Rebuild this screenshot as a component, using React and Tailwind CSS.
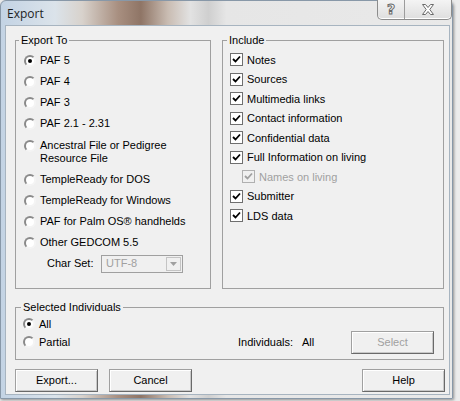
import React from "react";

const font = "font-['Liberation_Sans',Arial,sans-serif]";

function Radio({ checked }) {
    return (
        <span className="w-[12px] h-[12px] shrink-0 rounded-full border-2 border-t-[#8a8a8a] border-l-[#8a8a8a] border-r-[#f4f4f4] border-b-[#f4f4f4] bg-white flex items-center justify-center">
            {checked && <span className="w-[4px] h-[4px] rounded-full bg-black" />}
        </span>
    );
}

function Check({ disabled }) {
    return (
        <span className={"w-[13px] h-[13px] shrink-0 border border-[#6f6f6f] flex items-center justify-center " + (disabled ? "bg-[#f0f0f0] border-[#b0b0b0]" : "bg-white")}>
            <svg width="9" height="9" viewBox="0 0 9 9">
                <path d="M1 4 L3.5 6.5 L8 1.5" fill="none" stroke={disabled ? "#a0a0a0" : "#000"} strokeWidth="1.8" />
            </svg>
        </span>
    );
}

function RadioRow({ label, checked, tall }) {
    if (tall) {
        return (
            <div className="h-[35px] flex items-start gap-[4px] pt-[6px]">
                <Radio checked={checked} />
                <span className="leading-[13px] -mt-[1px]">{label}</span>
            </div>
        );
    }
    return (
        <div className="h-[21px] flex items-center gap-[4px]">
            <Radio checked={checked} />
            <span>{label}</span>
        </div>
    );
}

function CheckRow({ label, disabled, indent }) {
    return (
        <div className={"h-[19.5px] flex items-center gap-[4px] " + (indent ? "pl-[12px]" : "")}>
            <Check disabled={disabled} />
            <span className={disabled ? "text-[#a0a0a0]" : ""}>{label}</span>
        </div>
    );
}

function Button({ children, disabled, className }) {
    return (
        <div className={"h-[23px] w-[83px] flex items-center justify-center bg-[#f0f0f0] border border-[#a0a0a0] border-r-[#696969] border-b-[#696969] shadow-[inset_1px_1px_0_#ffffff,inset_-1px_-1px_0_#c8c8c8] " + (disabled ? "text-[#a0a0a0] " : "text-black ") + (className || "")}>
            {children}
        </div>
    );
}

const exportOptions = [
    { label: "PAF 5", checked: true },
    { label: "PAF 4" },
    { label: "PAF 3" },
    { label: "PAF 2.1 - 2.31" },
    { label: <>Ancestral File or Pedigree<br />Resource File</>, tall: true },
    { label: "TempleReady for DOS" },
    { label: "TempleReady for Windows" },
    { label: "PAF for Palm OS\u00ae handhelds" },
    { label: "Other GEDCOM 5.5" },
];

const includeOptions = [
    { label: "Notes" },
    { label: "Sources" },
    { label: "Multimedia links" },
    { label: "Contact information" },
    { label: "Confidential data" },
    { label: "Full Information on living" },
    { label: "Names on living", disabled: true, indent: true },
    { label: "Submitter" },
    { label: "LDS data" },
];

export default function App() {
    return (
        <div className={"w-[460px] h-[401px] overflow-hidden bg-[#ececec] flex items-start text-[11px] text-black " + font}>
            <div className="w-[453px] h-[399px] flex flex-col bg-[linear-gradient(90deg,#c3d3e4_0%,#dbe3ea_12%,#d8d2cc_18%,#a88f80_26%,#8f7566_31%,#c9bcb2_37%,#e2e2e2_42%,#cfcfcf_46%,#e6e6e6_50%,#e9e9e9_100%)] border border-[#8898a8] rounded-t-[6px] shadow-[1px_1px_3px_rgba(0,0,0,0.4)]">
                <div className="h-[24px] shrink-0 flex items-start justify-between">
                    <span className="pl-[6px] pt-[6px] text-[12px] leading-[14px] text-[#1e1e1e] font-['Open_Sans','Noto_Sans',sans-serif]">Export</span>
                    <div className="flex h-[20px] -mt-[1px] rounded-b-[5px] border border-t-0 border-[#8c8c8c] bg-[linear-gradient(180deg,#f4f4f4,#dedede)] shadow-[inset_0_-1px_0_#ffffff]">
                        <div className="w-[27px] flex items-center justify-center border-r border-[#9c9c9c] text-[14px] font-bold text-white [-webkit-text-stroke:1px_#6a6a6a] font-['DejaVu_Sans',sans-serif]">?</div>
                        <div className="w-[46px] flex items-center justify-center">
                            <svg width="14" height="11" viewBox="0 0 14 11">
                                <path d="M1.5 0.5 L4.5 0.5 L7 3.5 L9.5 0.5 L12.5 0.5 L8.8 5.5 L12.5 10.5 L9.5 10.5 L7 7.5 L4.5 10.5 L1.5 10.5 L5.2 5.5 Z" fill="#ffffff" stroke="#6a6a6a" strokeWidth="1" />
                            </svg>
                        </div>
                    </div>
                </div>
                <div className="ml-[4px] w-[445px] h-[370px] bg-[#f0f0f0] border border-[#a7b4c0] flex flex-col">
                    <div className="flex mt-[8px] ml-[9px] gap-[11px]">
                        <fieldset className="w-[196px] h-[255px] border border-[#a0a0a0] pl-[8px] pt-[3px]">
                            <legend className="ml-[-5px] px-[2px] leading-[13px]">Export To</legend>
                            {exportOptions.map((o, i) => (
                                <RadioRow key={i} label={o.label} checked={o.checked} tall={o.tall} />
                            ))}
                            <div className="h-[21px] flex items-center pl-[23px]">
                                <span className="w-[54px]">Char Set:</span>
                                <div className="w-[82px] h-[18px] border border-[#a0a0a0] bg-[#f0f0f0] flex items-center justify-between">
                                    <span className="pl-[4px] text-[#a0a0a0]">UTF-8</span>
                                    <span className="w-[15px] h-[14px] mr-[1px] border border-[#c4c4c4] flex items-center justify-center">
                                        <svg width="7" height="4" viewBox="0 0 7 4"><path d="M0 0 L7 0 L3.5 4 Z" fill="#a0a0a0" /></svg>
                                    </span>
                                </div>
                            </div>
                        </fieldset>
                        <fieldset className="w-[222px] h-[255px] border border-[#a0a0a0] pl-[7px] pt-[3px]">
                            <legend className="ml-[-3px] px-[2px] leading-[13px]">Include</legend>
                            {includeOptions.map((o, i) => (
                                <CheckRow key={i} label={o.label} disabled={o.disabled} indent={o.indent} />
                            ))}
                        </fieldset>
                    </div>
                    <fieldset className="mt-[12px] ml-[9px] w-[429px] h-[59px] border border-[#a0a0a0] pl-[7px] pr-[9px] pt-[1px]">
                        <legend className="ml-[-2px] px-[2px] leading-[13px]">Selected Individuals</legend>
                        <div className="h-[18px] flex items-center gap-[4px]">
                            <Radio checked />
                            <span>All</span>
                        </div>
                        <div className="h-[18px] flex items-center">
                            <Radio />
                            <span className="ml-[4px] w-[199px]">Partial</span>
                            <span className="w-[64px]">Individuals:</span>
                            <span className="w-[49px]">All</span>
                            <Button disabled className="w-[82px]">Select</Button>
                        </div>
                    </fieldset>
                    <div className="mt-[9px] ml-[9px] w-[430px] flex">
                        <Button>Export...</Button>
                        <Button className="ml-[11px]">Cancel</Button>
                        <Button className="ml-auto">Help</Button>
                    </div>
                </div>
            </div>
        </div>
    );
}
